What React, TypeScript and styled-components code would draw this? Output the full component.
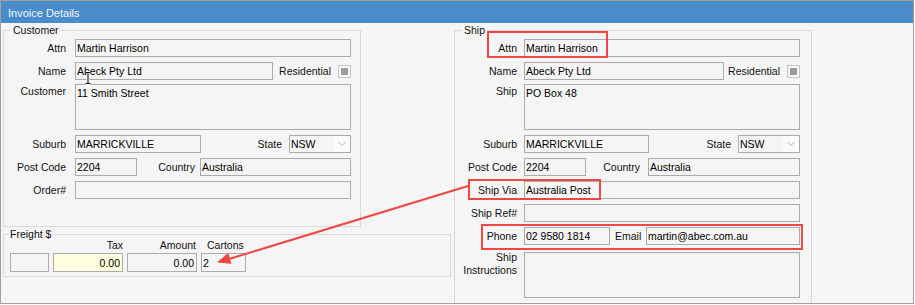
import React from "react";
import styled, { createGlobalStyle } from "styled-components";

const GlobalStyle = createGlobalStyle`
  html, body { margin: 0; padding: 0; background: #ffffff; }
  body {
    font-family: "Liberation Sans", Arial, sans-serif;
    font-size: 10.5px;
    color: #000000;
  }
  *, *::before, *::after { box-sizing: border-box; }
`;

const Window = styled.div`
  position: relative;
  width: 914px;
  height: 304px;
  border: 1px solid #a0a0a0;
  background: #f5f5f5;
  overflow: hidden;
`;

const TitleBar = styled.div`
  height: 22px;
  display: flex;
  align-items: center;
  padding: 1px 0 0 7px;
  background: #4a8ccb;
  color: #f2f6fb;
  font-size: 11px;
`;

const Body = styled.div`
  display: flex;
  align-items: flex-start;
  gap: 3px;
  padding: 1px 0 0 2px;
`;

const Column = styled.div`
  display: flex;
  flex-direction: column;
  gap: 2px;
`;

const Group = styled.fieldset<{ $width: number; $padR: number; $padB: number; $gap: number }>`
  margin: 0;
  min-width: 0;
  width: ${(p) => p.$width}px;
  padding: 2px ${(p) => p.$padR}px ${(p) => p.$padB}px 0;
  border: 1px solid #dadada;
  --label-gap: ${(p) => p.$gap}px;
`;

const FreightGroup = styled(Group)`
  padding-top: 0;
`;

const Legend = styled.legend<{ $indent: number; $lh?: number }>`
  margin-left: ${(p) => p.$indent}px;
  padding: 0 2px;
  line-height: ${(p) => p.$lh ?? 13}px;
  color: #111;
`;

const Stack = styled.div`
  display: flex;
  flex-direction: column;
  gap: 5px;
`;

const Row = styled.div<{ $h?: number; $top?: boolean; $mt?: number }>`
  display: flex;
  align-items: ${(p) => (p.$top ? "flex-start" : "center")};
  height: ${(p) => p.$h ?? 18}px;
  margin-top: ${(p) => p.$mt ?? 0}px;
`;

const Label = styled.span<{ $mt?: number }>`
  flex: 0 0 62px;
  width: 62px;
  margin-right: var(--label-gap);
  margin-top: ${(p) => p.$mt ?? 0}px;
  text-align: right;
  white-space: nowrap;
  line-height: 13px;
  color: #111;
`;

const SubLabel = styled.span<{ $gap: number; $ml?: number }>`
  margin-left: ${(p) => (p.$ml === undefined ? "auto" : `${p.$ml}px`)};
  margin-right: ${(p) => p.$gap}px;
  white-space: nowrap;
  color: #111;
`;

const TextInput = styled.input<{ $w?: number; $bg?: string; $right?: boolean }>`
  ${(p) => (p.$w ? `flex: 0 0 ${p.$w}px; width: ${p.$w}px;` : "flex: 1 1 0; min-width: 0;")}
  height: 100%;
  margin: 0;
  border: 1px solid #ababab;
  border-radius: 0;
  background: ${(p) => p.$bg ?? "transparent"};
  padding: 0 ${(p) => (p.$right ? 2 : 1)}px 0 1px;
  font: inherit;
  color: #000;
  text-align: ${(p) => (p.$right ? "right" : "left")};
  outline: none;
`;

const TextArea = styled.textarea`
  flex: 1 1 0;
  min-width: 0;
  height: 100%;
  margin: 0;
  border: 1px solid #ababab;
  border-radius: 0;
  background: transparent;
  padding: 2px 1px;
  font: inherit;
  line-height: 13px;
  color: #000;
  resize: none;
  overflow: hidden;
  outline: none;
`;

const Select = styled.div<{ $w: number }>`
  flex: 0 0 ${(p) => p.$w}px;
  height: 100%;
  display: flex;
  align-items: center;
  border: 1px solid #ababab;
`;

const SelectValue = styled.span`
  flex: 1 1 0;
  padding-left: 1px;
`;

const SelectButton = styled.span`
  align-self: stretch;
  width: 17px;
  display: flex;
  align-items: center;
  justify-content: center;
  background: #fbfbfb;
`;

const Check = styled.span`
  flex: 0 0 13px;
  width: 13px;
  height: 13px;
  display: flex;
  align-items: center;
  justify-content: center;
  border: 1px solid #c6c6c6;
  background: #f8f8f8;
  &::after {
    content: "";
    width: 7px;
    height: 7px;
    background: #9c9c9c;
  }
`;

const FreightGrid = styled.div`
  display: grid;
  grid-template-columns: 39px 70px 70px 45px;
  grid-template-rows: 10px 19px;
  column-gap: 4px;
  row-gap: 3px;
  padding-left: 6px;
`;

const HeadCell = styled.span<{ $align?: "left" | "right"; $pl?: number; $pr?: number }>`
  line-height: 10px;
  text-align: ${(p) => p.$align ?? "left"};
  padding-left: ${(p) => p.$pl ?? 0}px;
  padding-right: ${(p) => p.$pr ?? 0}px;
  white-space: nowrap;
  color: #111;
`;

const Overlay = styled.svg`
  position: absolute;
  left: -1px;
  top: -1px;
  width: 914px;
  height: 304px;
  pointer-events: none;
`;

const Chevron = () => (
  <svg width="8" height="6" viewBox="0 0 8 6">
    <path d="M0.5 1 L4 4.5 L7.5 1" fill="none" stroke="#b4b4b4" strokeWidth="1" />
  </svg>
);

const StateSelect = () => (
  <Select $w={62}>
    <SelectValue>NSW</SelectValue>
    <SelectButton>
      <Chevron />
    </SelectButton>
  </Select>
);

const RED = "#f04646";

export default function App() {
  return (
    <>
      <GlobalStyle />
      <Window>
        <TitleBar>Invoice Details</TitleBar>
        <Body>
          <Column>
            <Group $width={358} $padR={9} $padB={27} $gap={9}>
              <Legend $indent={7}>Customer</Legend>
              <Stack>
                <Row>
                  <Label>Attn</Label>
                  <TextInput readOnly value="Martin Harrison" />
                </Row>
                <Row>
                  <Label>Name</Label>
                  <TextInput readOnly $w={198} value="Abeck Pty Ltd" />
                  <SubLabel $gap={7}>Residential</SubLabel>
                  <Check />
                </Row>
                <Row $h={46} $top $mt={-1}>
                  <Label $mt={1}>Customer</Label>
                  <TextArea readOnly value="11 Smith Street" />
                </Row>
                <Row>
                  <Label>Suburb</Label>
                  <TextInput readOnly $w={126} value="MARRICKVILLE" />
                  <SubLabel $gap={7}>State</SubLabel>
                  <StateSelect />
                </Row>
                <Row>
                  <Label>Post Code</Label>
                  <TextInput readOnly $w={62} value="2204" />
                  <SubLabel $gap={5}>Country</SubLabel>
                  <TextInput readOnly $w={151} value="Australia" />
                </Row>
                <Row>
                  <Label>Order#</Label>
                  <TextInput readOnly value="" />
                </Row>
              </Stack>
            </Group>
            <FreightGroup $width={448} $padR={0} $padB={4} $gap={0}>
              <Legend $indent={4} $lh={11}>Freight $</Legend>
              <FreightGrid>
                <HeadCell />
                <HeadCell $align="right">Tax</HeadCell>
                <HeadCell $align="right" $pr={1}>Amount</HeadCell>
                <HeadCell $pl={6}>Cartons</HeadCell>
                <TextInput readOnly value="" />
                <TextInput readOnly $bg="#ffffe0" $right value="0.00" />
                <TextInput readOnly $right value="0.00" />
                <TextInput readOnly value="2" />
              </FreightGrid>
            </FreightGroup>
          </Column>
          <Group $width={358} $padR={11} $padB={30} $gap={7}>
            <Legend $indent={7}>Ship</Legend>
            <Stack>
              <Row>
                <Label>Attn</Label>
                <TextInput readOnly value="Martin Harrison" />
              </Row>
              <Row>
                <Label>Name</Label>
                <TextInput readOnly $w={200} value="Abeck Pty Ltd" />
                <SubLabel $gap={7}>Residential</SubLabel>
                <Check />
              </Row>
              <Row $h={46} $top $mt={-1}>
                <Label $mt={1}>Ship</Label>
                <TextArea readOnly value="PO Box 48" />
              </Row>
              <Row>
                <Label>Suburb</Label>
                <TextInput readOnly $w={125} value="MARRICKVILLE" />
                <SubLabel $gap={7}>State</SubLabel>
                <StateSelect />
              </Row>
              <Row>
                <Label>Post Code</Label>
                <TextInput readOnly $w={62} value="2204" />
                <SubLabel $gap={8}>Country</SubLabel>
                <TextInput readOnly $w={152} value="Australia" />
              </Row>
              <Row>
                <Label>Ship Via</Label>
                <TextInput readOnly value="Australia Post" />
              </Row>
              <Row>
                <Label>Ship Ref#</Label>
                <TextInput readOnly value="" />
              </Row>
              <Row>
                <Label>Phone</Label>
                <TextInput readOnly $w={86} value="02 9580 1814" />
                <SubLabel $gap={0} $ml={5}>Email</SubLabel>
                <TextInput readOnly $w={154} style={{ marginLeft: "auto" }} value="martin@abec.com.au" />
              </Row>
              <Row $h={46} $top $mt={2}>
                <Label $mt={-1}>
                  Ship
                  <br />
                  Instructions
                </Label>
                <TextArea readOnly value="" />
              </Row>
            </Stack>
          </Group>
        </Body>
        <Overlay viewBox="0 0 914 304">
          <path
            d="M86 72.5 H90 M88 72.5 V83.5 M85.5 83.5 H90.5"
            stroke="#ffffff"
            strokeWidth="3"
            fill="none"
          />
          <path
            d="M86 72.5 H90 M88 72.5 V83.5 M85.5 83.5 H90.5"
            stroke="#000000"
            strokeWidth="1"
            fill="none"
          />
          <rect x="488" y="32" width="119" height="25" fill="none" stroke={RED} strokeWidth="2" />
          <rect x="469" y="180" width="131" height="19" fill="none" stroke={RED} strokeWidth="2" />
          <rect x="482" y="225" width="320" height="24" fill="none" stroke={RED} strokeWidth="2" />
          <line x1="468" y1="186" x2="224" y2="260.5" stroke={RED} strokeWidth="2" />
          <polygon points="218,262 230.9,263.3 228,253.7" fill={RED} stroke={RED} strokeWidth="1" strokeLinejoin="round" />
        </Overlay>
      </Window>
    </>
  );
}
